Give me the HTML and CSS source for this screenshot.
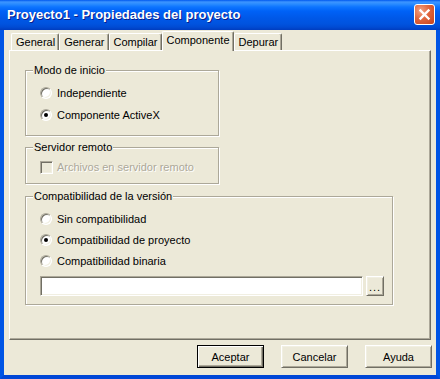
FILE: index.html
```html
<!DOCTYPE html>
<html lang="es">
<head>
    <meta charset="UTF-8">
    <title>Proyecto1 - Propiedades del proyecto</title>
    <link rel="stylesheet" href="styles.css">
</head>
<body>
    <div class="window">
        <div class="titlebar">
            <span class="title">Proyecto1 - Propiedades del proyecto</span>
            <span class="close">
                <svg width="19" height="19" viewBox="0 0 19 19">
                    <path d="M5.5 5.5 L13.5 13.5 M13.5 5.5 L5.5 13.5" stroke="#fff" stroke-width="2.4" stroke-linecap="square" fill="none"/>
                </svg>
            </span>
        </div>

        <div class="frame">
            <div class="tabs">
                <div class="tab">General</div>
                <div class="tab">Generar</div>
                <div class="tab">Compilar</div>
                <div class="tab active">Componente</div>
                <div class="tab">Depurar</div>
            </div>

            <div class="panel">
                <div class="group group-start">
                    <div class="group-title">Modo de inicio</div>
                    <div class="option"><span class="radio"></span>Independiente</div>
                    <div class="option"><span class="radio checked"></span>Componente ActiveX</div>
                </div>

                <div class="group group-remote">
                    <div class="group-title">Servidor remoto</div>
                    <div class="option disabled"><span class="check"></span>Archivos en servidor remoto</div>
                </div>

                <div class="group group-compat">
                    <div class="group-title">Compatibilidad de la versión</div>
                    <div class="option"><span class="radio"></span>Sin compatibilidad</div>
                    <div class="option"><span class="radio checked"></span>Compatibilidad de proyecto</div>
                    <div class="option"><span class="radio"></span>Compatibilidad binaria</div>
                    <div class="file-row">
                        <div class="textbox"></div>
                        <div class="btn btn-small">...</div>
                    </div>
                </div>
            </div>

            <div class="buttons">
                <div class="btn default">Aceptar</div>
                <div class="btn">Cancelar</div>
                <div class="btn">Ayuda</div>
            </div>
        </div>
    </div>
</body>
</html>
```

FILE: styles.css
```css
html, body {
    margin: 0;
    padding: 0;
}
body {
    width: 440px;
    height: 379px;
    font-family: "Liberation Sans", Arial, sans-serif;
    font-size: 11px;
    color: #000;
    background: #ECE9D8;
    overflow: hidden;
}
.window {
    width: 440px;
    height: 379px;
    display: flex;
    flex-direction: column;
}

/* title bar */
.titlebar {
    height: 30px;
    flex: none;
    box-sizing: border-box;
    display: flex;
    align-items: center;
    justify-content: space-between;
    padding: 0 5px 1px 7px;
    background: linear-gradient(to bottom, #0058EE 0, #3D95FF 2px, #2A8CFF 4px, #0D74FF 7px, #0062F7 11px, #0058E8 18px, #0053DE 24px, #004BD4 27px, #003DBF 30px);
}
.title {
    color: #fff;
    font-weight: bold;
    font-size: 13px;
    text-shadow: 1px 1px 0 #0A1E8C;
}
.close {
    width: 21px;
    height: 21px;
    box-sizing: border-box;
    border: 1px solid #fff;
    border-radius: 3px;
    background: radial-gradient(circle at 30% 30%, #F3A283 0, #E0663D 45%, #C7421A 100%);
    display: flex;
    align-items: center;
    justify-content: center;
}

/* window frame */
.frame {
    flex: 1;
    border-style: solid;
    border-width: 0 4px 4px;
    border-color: #0055E5 #0055E5 #0047D6;
    background: #ECE9D8;
}

/* tabs */
.tabs {
    display: flex;
    align-items: flex-end;
    margin: 1px 0 0 7px;
}
.tab {
    height: 17px;
    box-sizing: border-box;
    padding: 2px 3px 0 4px;
    border-top: 1px solid #fff;
    border-left: 1px solid #fff;
    border-right: 1px solid #716F64;
    box-shadow: inset -1px 0 0 #ACA899;
    border-radius: 2px 2px 0 0;
    background: #ECE9D8;
    white-space: nowrap;
}
.tab.active {
    position: relative;
    z-index: 1;
    height: 20px;
    margin-bottom: -1px;
    padding-top: 2px;
}

.panel {
    height: 290px;
    box-sizing: border-box;
    margin: 0 5px;
    padding: 19px 0 0 15px;
    border-top: 1px solid #fff;
    border-left: 1px solid #fff;
    border-right: 1px solid #716F64;
    border-bottom: 1px solid #716F64;
    box-shadow: inset -1px -1px 0 #ACA899;
}

/* group boxes */
.group {
    box-sizing: border-box;
    border: 1px solid #ACA899;
    box-shadow: 1px 1px 0 #fff, inset 1px 1px 0 #fff;
    padding: 0 8px 0 14px;
}
.group-title {
    display: table;
    margin: -7px 0 5px -7px;
    padding: 0 1px;
    line-height: 13px;
    background: #ECE9D8;
}
.group-start {
    width: 194px;
    height: 66px;
}
.group-remote {
    width: 194px;
    height: 37px;
    margin-top: 11px;
}
.group-remote .group-title {
    margin-bottom: 2px;
}
.group-compat {
    width: 368px;
    height: 109px;
    margin-top: 12px;
}
.group-compat .group-title {
    margin-bottom: 5px;
}
.group-compat .option {
    height: 21px;
}

.option {
    display: flex;
    align-items: center;
    height: 22px;
    white-space: nowrap;
}
.option.disabled {
    color: #ACA899;
    text-shadow: 1px 1px 0 #fff;
}
.radio {
    width: 12px;
    height: 12px;
    box-sizing: border-box;
    margin-right: 5px;
    border-radius: 50%;
    border: 1px solid;
    border-color: #ACA899 #fff #fff #ACA899;
    box-shadow: inset 1px 1px 0 #716F64, inset -1px -1px 0 #F1EFE2;
    background: #fff;
    display: flex;
    align-items: center;
    justify-content: center;
}
.radio.checked::after {
    content: "";
    width: 4px;
    height: 4px;
    border-radius: 50%;
    background: #000;
}
.check {
    width: 13px;
    height: 13px;
    box-sizing: border-box;
    margin-right: 4px;
    border: 1px solid;
    border-color: #ACA899 #fff #fff #ACA899;
    box-shadow: inset 1px 1px 0 #716F64, inset -1px -1px 0 #F1EFE2;
    background: #ECE9D8;
}

.file-row {
    display: flex;
    gap: 3px;
    margin-top: 5px;
}
.textbox {
    flex: 1;
    height: 20px;
    box-sizing: border-box;
    border: 1px solid;
    border-color: #ACA899 #fff #fff #ACA899;
    box-shadow: inset 1px 1px 0 #716F64, inset -1px -1px 0 #F1EFE2;
    background: #fff;
}

/* push buttons */
.btn {
    width: 67px;
    height: 23px;
    box-sizing: border-box;
    display: flex;
    align-items: center;
    justify-content: center;
    border: 1px solid;
    border-color: #fff #716F64 #716F64 #fff;
    box-shadow: inset 1px 1px 0 #F1EFE2, inset -1px -1px 0 #ACA899;
    background: #ECE9D8;
}
.btn.default {
    border-color: #000;
    box-shadow: inset 1px 1px 0 #fff, inset -1px -1px 0 #716F64, inset -2px -2px 0 #ACA899;
}
.btn-small {
    width: 18px;
    height: 20px;
    align-items: flex-end;
    padding-bottom: 4px;
    line-height: 8px;
    letter-spacing: 1px;
}
.buttons {
    display: flex;
    justify-content: flex-end;
    gap: 17px;
    margin-top: 5px;
    padding-right: 4px;
}
```
